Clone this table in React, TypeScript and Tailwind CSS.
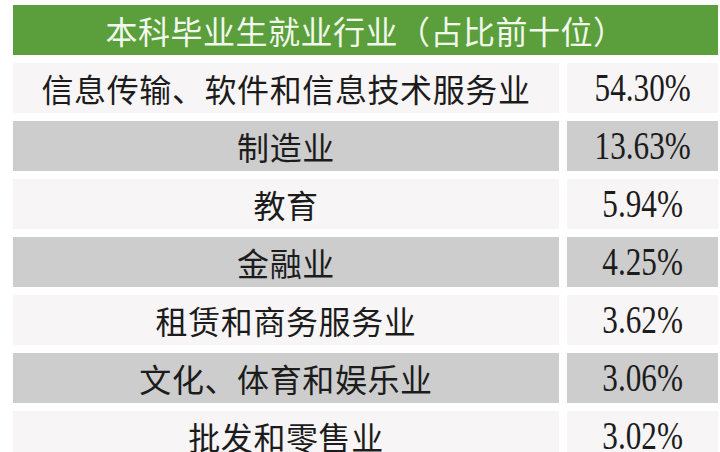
const rows = [
  { name: "信息传输、软件和信息技术服务业", value: "54.30%" },
  { name: "制造业", value: "13.63%" },
  { name: "教育", value: "5.94%" },
  { name: "金融业", value: "4.25%" },
  { name: "租赁和商务服务业", value: "3.62%" },
  { name: "文化、体育和娱乐业", value: "3.06%" },
  { name: "批发和零售业", value: "3.02%" },
];

export default function App() {
  return (
    <div className="h-[452px] overflow-hidden bg-white pl-[13px] pr-[2px] pt-[5px]">
      <div className="flex flex-col gap-2">
        {/* Header */}
        <div className="flex h-[50px] items-center justify-center bg-[#5a9f3b] font-['Noto_Sans_CJK_SC',sans-serif] text-[32px] leading-none tracking-[0.5px] text-[#f2f8ec]">
          本科毕业生就业行业（占比前十位）
        </div>
        {rows.map((row, i) => (
          <div key={row.name} className="grid grid-cols-[1fr_151px] gap-2">
            <div
              className={
                "flex h-[50px] items-center justify-center font-['Noto_Sans_CJK_SC',sans-serif] text-[32px] leading-none tracking-[0.6px] text-[#1c1c1c] " +
                (i % 2 === 1 ? "bg-[#cdcdcd]" : "bg-[#f8f5f6]")
              }
            >
              {row.name}
            </div>
            <div
              className={
                "flex h-[50px] items-center justify-center " +
                (i % 2 === 1 ? "bg-[#cdcdcd]" : "bg-[#f8f5f6]")
              }
            >
              <span className="inline-block scale-x-[0.78] font-['Liberation_Serif',serif] text-[40px] leading-none text-[#1c1c1c]">
                {row.value}
              </span>
            </div>
          </div>
        ))}
      </div>
    </div>
  );
}
